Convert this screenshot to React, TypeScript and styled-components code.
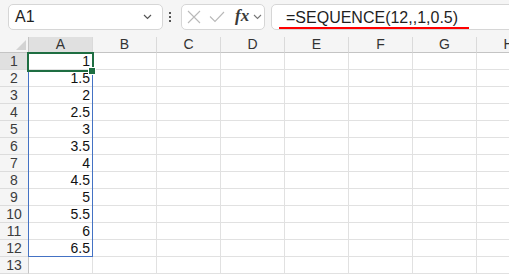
import React from 'react';
import styled, { createGlobalStyle } from 'styled-components';

const GlobalStyle = createGlobalStyle`
  html, body {
    margin: 0;
    padding: 0;
    background: #ffffff;
    overflow: hidden;
  }
  body {
    font-family: "Liberation Sans", Arial, sans-serif;
  }
`;

const Window = styled.div`
  width: 509px;
  height: 276px;
  overflow: hidden;
  background: #ffffff;
`;

const Toolbar = styled.div`
  height: 37px;
  box-sizing: border-box;
  background: #f5f5f5;
  display: flex;
  align-items: flex-start;
  padding: 4px 0 0 8px;
  overflow: hidden;
`;

const Box = styled.div<{ $width: number }>`
  flex: 0 0 auto;
  width: ${({ $width }) => $width}px;
  height: 26px;
  box-sizing: border-box;
  background: #ffffff;
  border: 1px solid #d6d6d6;
  border-radius: 5px;
  display: flex;
  align-items: center;
`;

const NameText = styled.span`
  flex: 1;
  padding-left: 6px;
  font-size: 16px;
  color: #1f1f1f;
`;

const Chevron = styled.svg`
  display: block;
  flex: 0 0 auto;
`;

const Dots = styled.div`
  flex: 0 0 auto;
  width: 3px;
  height: 26px;
  margin: 0 9px 0 6px;
  display: flex;
  flex-direction: column;
  justify-content: center;
  gap: 2px;

  span {
    width: 2px;
    height: 2px;
    background: #555555;
  }
`;

const FxLabel = styled.span`
  font-family: "Liberation Serif", "Times New Roman", serif;
  font-style: italic;
  font-weight: 700;
  font-size: 17px;
  color: #3a3a3a;
  margin: 0 4px 2px 0;
`;

const Formula = styled.span`
  display: block;
  margin: 2px 0 0 7px;
  padding: 0 11px 0 7px;
  border-bottom: 2px solid #ff0000;
  font-size: 16px;
  line-height: 19px;
  color: #1f1f1f;
  white-space: pre;
`;

const Sheet = styled.div`
  position: relative;
  display: grid;
  grid-template-columns: 29px repeat(8, 64px);
  grid-template-rows: 16px;
  grid-auto-rows: 17px;
`;

const ColHead = styled.div<{ $active?: boolean }>`
  box-sizing: border-box;
  background: ${({ $active }) => ($active ? '#e0e0e0' : '#f5f5f5')};
  border-right: 1px solid #dadada;
  border-bottom: 1px solid #c4c4c4;
  font-size: 14px;
  line-height: 15px;
  text-align: center;
  color: #333333;
`;

const Corner = styled.div`
  box-sizing: border-box;
  background: #f5f5f5;
  border-right: 1px solid #c4c4c4;
  border-bottom: 1px solid #c4c4c4;
  display: flex;
  justify-content: flex-end;
  align-items: flex-end;
  padding: 0 2px 2px 0;

  &::after {
    content: '';
    width: 0;
    height: 0;
    border-left: 10px solid transparent;
    border-bottom: 10px solid #d3d3d3;
  }
`;

const RowHead = styled.div<{ $active?: boolean }>`
  box-sizing: border-box;
  background: ${({ $active }) => ($active ? '#e0e0e0' : '#f5f5f5')};
  border-right: 1px solid #c4c4c4;
  border-bottom: 1px solid #dcdcdc;
  font-size: 14px;
  line-height: 16px;
  text-align: center;
  color: #3c3c3c;
`;

const Cell = styled.div`
  box-sizing: border-box;
  border-right: 1px solid #e1e1e1;
  border-bottom: 1px solid #e1e1e1;
  font-size: 14px;
  line-height: 16px;
  text-align: right;
  padding-right: 2px;
  color: #111111;
`;

const SpillRange = styled.div`
  position: absolute;
  left: 28px;
  top: 16px;
  width: 65px;
  height: 204px;
  box-sizing: border-box;
  border: 1px solid #4472c4;
  pointer-events: none;
`;

const ActiveCell = styled.div`
  position: absolute;
  left: 27px;
  top: 15px;
  width: 67px;
  height: 20px;
  box-sizing: border-box;
  border: 2px solid #1e6e42;
  pointer-events: none;
`;

const FillHandle = styled.div`
  position: absolute;
  left: 89px;
  top: 31px;
  width: 6px;
  height: 6px;
  box-sizing: border-box;
  background: #1e6e42;
  outline: 1px solid #ffffff;
`;

const columns = ['A', 'B', 'C', 'D', 'E', 'F', 'G', 'H'];
const values = ['1', '1.5', '2', '2.5', '3', '3.5', '4', '4.5', '5', '5.5', '6', '6.5', ''];

export default function App() {
  return (
    <Window>
      <GlobalStyle />
      <Toolbar>
        <Box $width={155}>
          <NameText>A1</NameText>
          <Chevron width="9" height="6" viewBox="0 0 9 6" style={{ marginRight: 10 }}>
            <path d="M1 1l3.5 3.5L8 1" fill="none" stroke="#555" strokeWidth="1.2" />
          </Chevron>
        </Box>
        <Dots>
          <span />
          <span />
          <span />
        </Dots>
        <Box $width={84}>
          <svg width="14" height="14" viewBox="0 0 14 14" style={{ marginLeft: 5 }}>
            <path d="M1 1l12 12M13 1L1 13" stroke="#b9b9b9" strokeWidth="1.1" fill="none" />
          </svg>
          <svg width="16" height="12" viewBox="0 0 16 12" style={{ marginLeft: 8 }}>
            <path d="M1 5.5l5 5L15 1" stroke="#b9b9b9" strokeWidth="1.1" fill="none" />
          </svg>
          <FxLabel style={{ marginLeft: 10 }}>fx</FxLabel>
          <Chevron width="9" height="6" viewBox="0 0 9 6">
            <path d="M1 1l3.5 3.5L8 1" fill="none" stroke="#777" strokeWidth="1.1" />
          </Chevron>
        </Box>
        <Box $width={260} style={{ marginLeft: 6 }}>
          <Formula>=SEQUENCE(12,,1,0.5)</Formula>
        </Box>
      </Toolbar>
      <Sheet>
        <Corner />
        {columns.map((c) => (
          <ColHead key={c} $active={c === 'A'}>
            {c}
          </ColHead>
        ))}
        {values.map((v, i) => (
          <React.Fragment key={i}>
            <RowHead $active={i === 0}>{i + 1}</RowHead>
            {columns.map((c) => (
              <Cell key={c}>{c === 'A' ? v : ''}</Cell>
            ))}
          </React.Fragment>
        ))}
        <SpillRange />
        <ActiveCell />
        <FillHandle />
      </Sheet>
    </Window>
  );
}
